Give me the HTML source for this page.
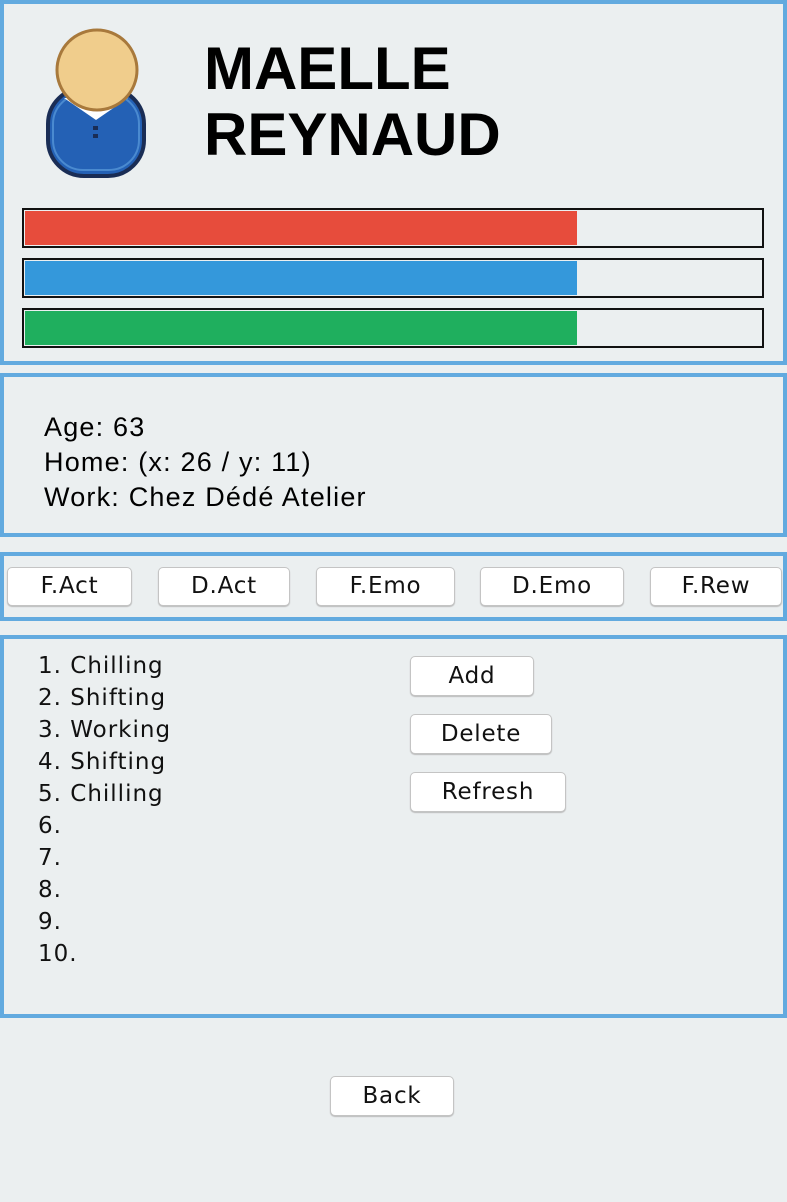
<!DOCTYPE html>
<html><head><style>
body{margin:0;width:787px;height:1202px;background:#ebeff0;position:relative;overflow:hidden;font-family:"DejaVu Sans","Liberation Sans",sans-serif}
.p{position:absolute;left:0;width:779px;border:4px solid #62aadf;box-sizing:content-box}
.b{position:absolute;background:#fff;border:1px solid #c4c4c4;border-radius:5px;box-sizing:border-box;text-align:center;font-size:23px;letter-spacing:0.8px;color:#111;box-shadow:0 1px 1px #bbb}
.bar{position:absolute;left:22px;width:742px;height:40px;border:2px solid #111;box-sizing:border-box}
.bar div{position:absolute;left:1px;top:1px;bottom:1px;width:552px}
.t{position:absolute;font-size:23px;letter-spacing:1px;color:#111;line-height:32px}
</style></head><body>
<div class="p" style="top:0;height:357px"></div>
<svg style="position:absolute;left:44px;top:28px" width="105" height="152" viewBox="0 0 105 152">
<rect x="4" y="60" width="96" height="88" rx="36" fill="#2461b5" stroke="#1a2d55" stroke-width="4"/>
<rect x="9" y="66" width="86" height="76" rx="30" fill="none" stroke="#4a8ad0" stroke-width="2"/>
<path d="M20 70 L52 92 L84 70 Z" fill="#fff"/>
<rect x="49" y="98" width="5" height="4" fill="#1a2d55"/><rect x="49" y="106" width="5" height="4" fill="#1a2d55"/>
<circle cx="53" cy="42" r="40" fill="#f0cd8c" stroke="#a8793c" stroke-width="3"/>
</svg>
<div style="position:absolute;left:204px;top:36px;font:bold 60px/66px 'Liberation Sans',sans-serif;color:#000">MAELLE<br>REYNAUD</div>
<div class="bar" style="top:208px"><div style="background:#e74c3c"></div></div>
<div class="bar" style="top:258px"><div style="background:#3498db"></div></div>
<div class="bar" style="top:308px"><div style="background:#1faf5e"></div></div>
<div class="p" style="top:373px;height:156px"></div>
<div style="position:absolute;left:44px;top:410px;font:27px/35px 'Liberation Sans',sans-serif;letter-spacing:1.2px;color:#000">Age: 63<br>Home: (x: 26 / y: 11)<br>Work: Chez Dédé Atelier</div>
<div class="p" style="top:552px;height:61px"></div>
<div class="b" style="left:7px;top:567px;width:125px;height:39px;line-height:37px">F.Act</div>
<div class="b" style="left:158px;top:567px;width:132px;height:39px;line-height:37px">D.Act</div>
<div class="b" style="left:316px;top:567px;width:139px;height:39px;line-height:37px">F.Emo</div>
<div class="b" style="left:480px;top:567px;width:144px;height:39px;line-height:37px">D.Emo</div>
<div class="b" style="left:650px;top:567px;width:132px;height:39px;line-height:37px">F.Rew</div>
<div class="p" style="top:635px;height:375px"></div>
<div class="t" style="left:38px;top:650px">1. Chilling<br>2. Shifting<br>3. Working<br>4. Shifting<br>5. Chilling<br>6.<br>7.<br>8.<br>9.<br>10.</div>
<div class="b" style="left:410px;top:656px;width:124px;height:40px;line-height:38px">Add</div>
<div class="b" style="left:410px;top:714px;width:142px;height:40px;line-height:38px">Delete</div>
<div class="b" style="left:410px;top:772px;width:156px;height:40px;line-height:38px">Refresh</div>
<div class="b" style="left:330px;top:1076px;width:124px;height:40px;line-height:38px">Back</div>
</body></html>
